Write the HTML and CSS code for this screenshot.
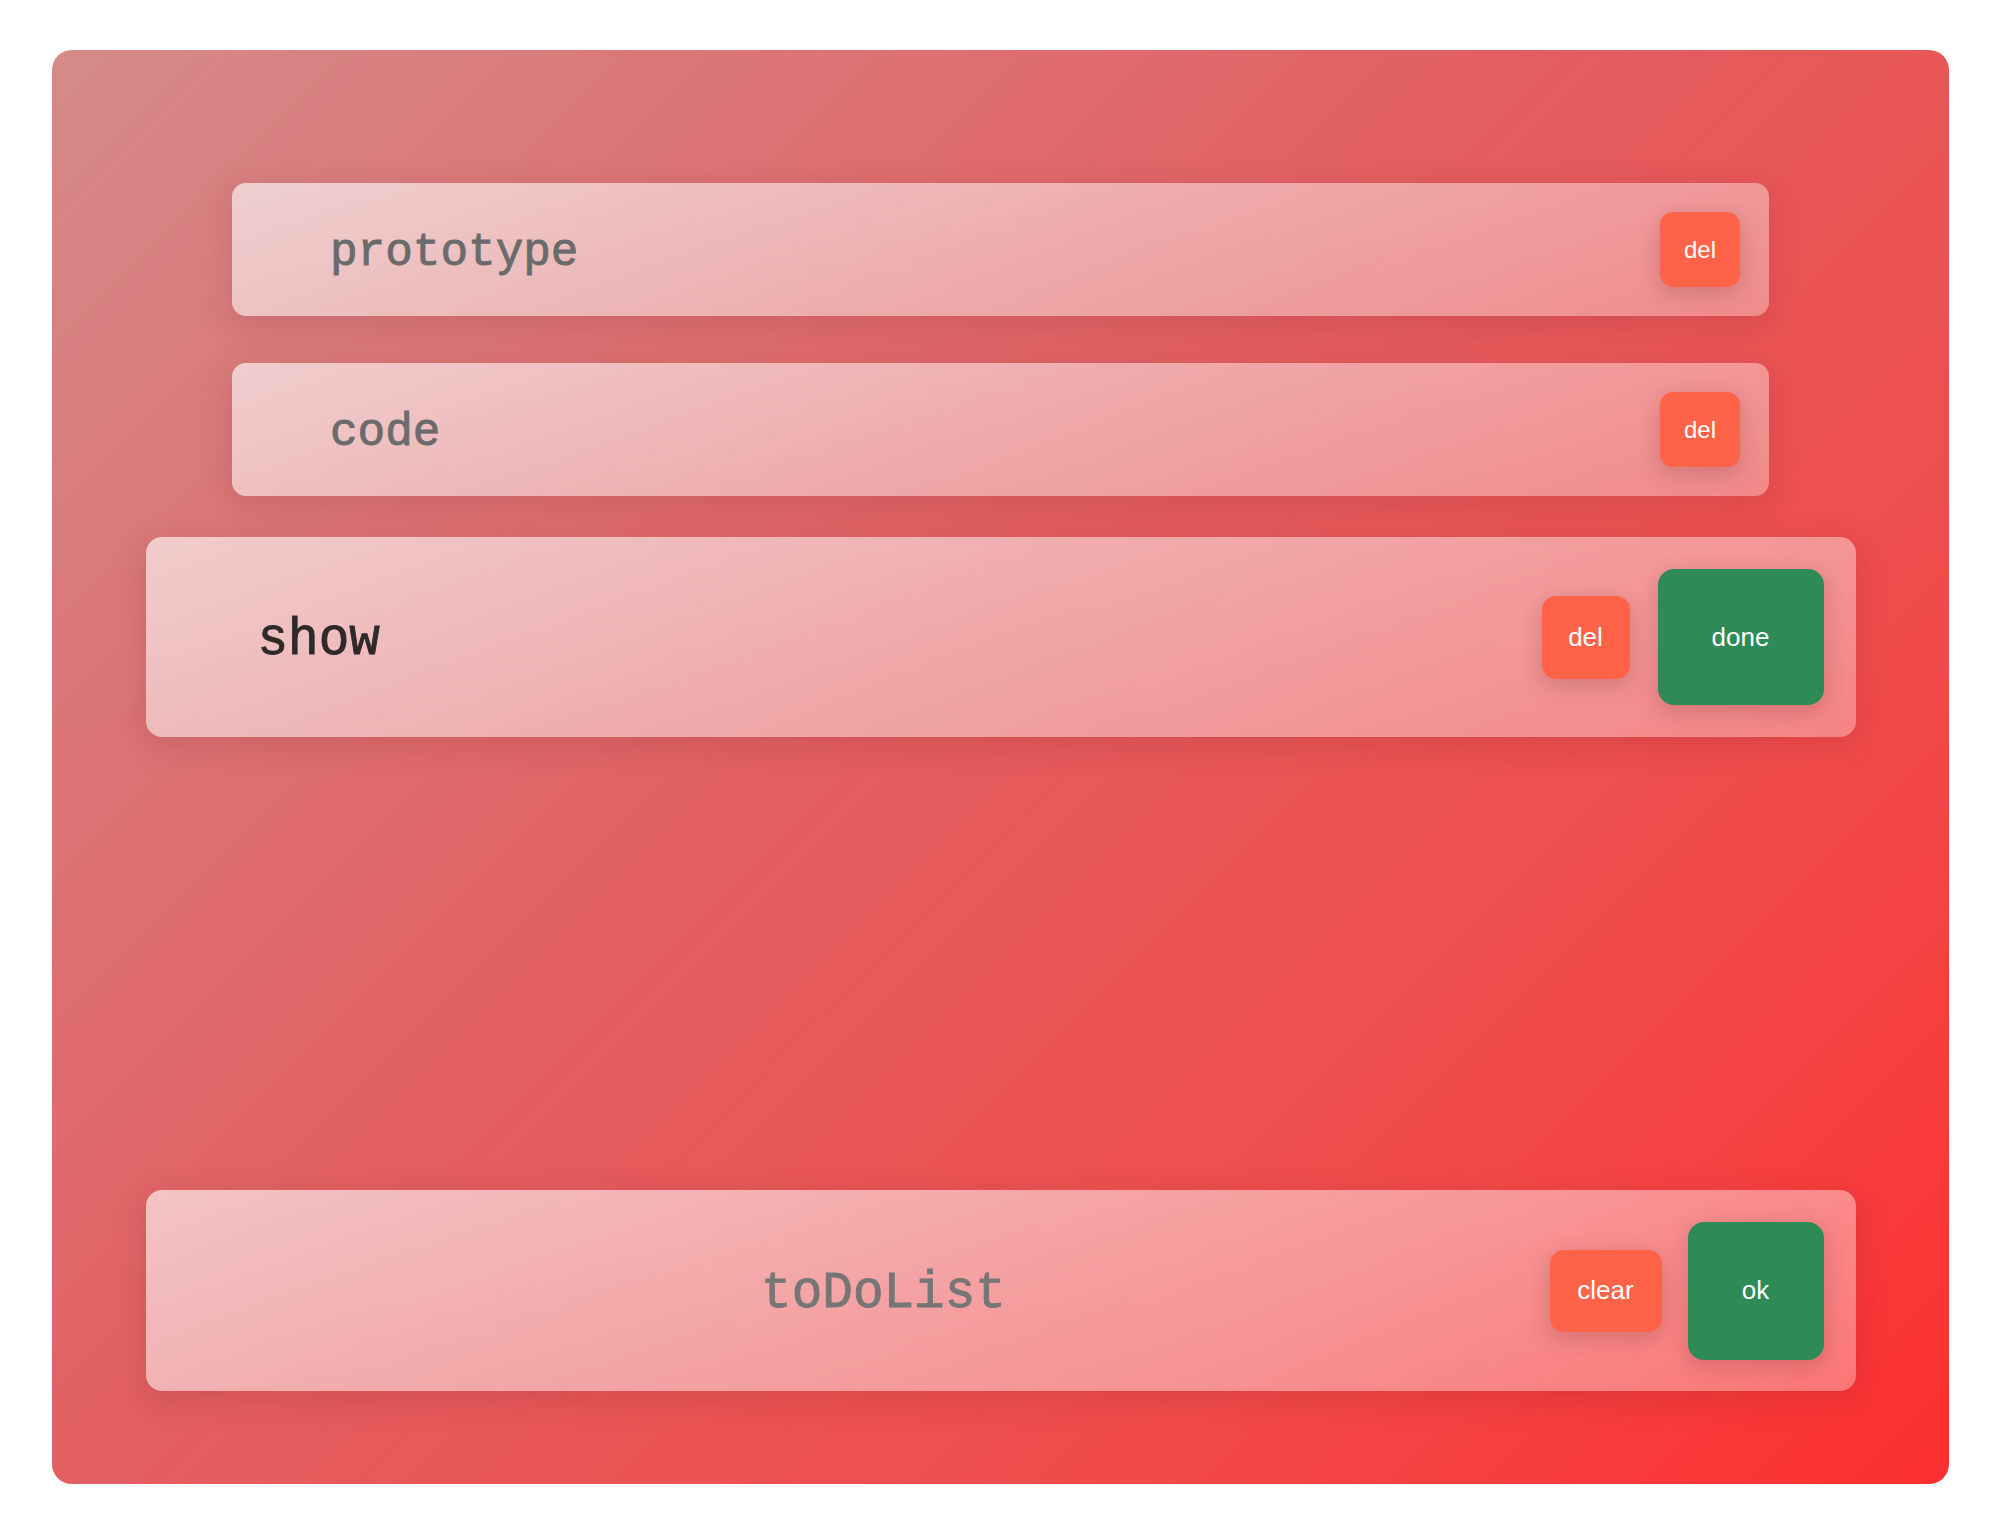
FILE: index.html
```html
<!DOCTYPE html>
<html lang="en">
<head>
<meta charset="utf-8">
<title>toDoList</title>
<link rel="stylesheet" href="styles.css">
</head>
<body>
<div class="board">
  <ul class="list">
    <li class="item">
      <span class="item-text">prototype</span>
      <button class="btn btn-del">del</button>
    </li>
    <li class="item">
      <span class="item-text">code</span>
      <button class="btn btn-del">del</button>
    </li>
    <li class="item item-active">
      <span class="item-text">show</span>
      <div class="actions">
        <button class="btn btn-del btn-del-lg">del</button>
        <button class="btn btn-done">done</button>
      </div>
    </li>
  </ul>
  <div class="entry">
    <input class="entry-input" type="text" value="toDoList">
    <div class="actions actions-entry">
      <button class="btn btn-clear">clear</button>
      <button class="btn btn-ok">ok</button>
    </div>
  </div>
</div>
</body>
</html>
```

FILE: styles.css
```css
html, body {
  margin: 0;
  padding: 0;
  background: #ffffff;
}

body {
  font-family: "Liberation Sans", Arial, sans-serif;
}

.board {
  box-sizing: border-box;
  margin: 50px 0 0 52px;
  width: 1897px;
  height: 1434px;
  border-radius: 20px;
  background: linear-gradient(135deg, #d58a8a 0%, #e35e60 45%, #f14a4a 75%, #fd2f2f 100%);
  display: flex;
  flex-direction: column;
  align-items: center;
  padding: 133px 0 93px;
}

.list {
  list-style: none;
  margin: 0;
  padding: 0;
  display: flex;
  flex-direction: column;
  align-items: center;
  flex: 1;
}

.item {
  box-sizing: border-box;
  width: 1537px;
  height: 133px;
  margin-bottom: 47px;
  padding: 0 29px 0 98px;
  border-radius: 14px;
  display: flex;
  align-items: center;
  justify-content: space-between;
  background: linear-gradient(165deg, rgba(255,255,255,0.62) 0%, rgba(255,255,255,0.45) 50%, rgba(255,255,255,0.32) 100%);
  box-shadow: 0 8px 30px 4px rgba(90,25,25,0.13);
}

.item:nth-child(2) {
  margin-bottom: 41px;
}

.item-text {
  font-family: "Liberation Mono", "Courier New", monospace;
  font-weight: normal;
  -webkit-text-stroke: 0.9px currentColor;
  font-size: 46px;
  color: #6b6b6b;
  position: relative;
  top: 3px;
}

.item-active {
  width: 1710px;
  height: 200px;
  padding: 0 32px 0 112px;
  border-radius: 16px;
}

.item-active .item-text {
  font-size: 51px;
  color: #2e2a2a;
}

.actions {
  display: flex;
  align-items: center;
  gap: 28px;
}

.btn {
  border: none;
  color: #ffffff;
  font-family: "Liberation Sans", Arial, sans-serif;
  font-size: 26px;
  padding: 0;
  cursor: pointer;
  box-shadow: 0 6px 20px 2px rgba(90,40,40,0.2);
}

.btn-del {
  width: 80px;
  height: 75px;
  border-radius: 13px;
  background: #ff6347;
  font-size: 24px;
}

.btn-del-lg {
  width: 88px;
  height: 83px;
  border-radius: 14px;
  font-size: 26px;
}

.btn-done {
  width: 166px;
  height: 136px;
  border-radius: 16px;
  background: #2e8b57;
}

.entry {
  box-sizing: border-box;
  width: 1710px;
  height: 201px;
  padding: 0 32px 0 100px;
  border-radius: 16px;
  display: flex;
  align-items: center;
  background: linear-gradient(165deg, rgba(255,255,255,0.62) 0%, rgba(255,255,255,0.45) 50%, rgba(255,255,255,0.32) 100%);
  box-shadow: 0 8px 30px 4px rgba(90,25,25,0.13);
}

.entry-input {
  flex: 1;
  min-width: 0;
  border: none;
  outline: none;
  background: transparent;
  text-align: center;
  font-family: "Liberation Mono", "Courier New", monospace;
  font-weight: normal;
  -webkit-text-stroke: 0.9px currentColor;
  font-size: 51px;
  color: #767676;
  margin: 6px 28px 0 0;
  padding: 0;
}

.actions-entry {
  gap: 26px;
}

.btn-clear {
  width: 112px;
  height: 82px;
  border-radius: 14px;
  background: #ff6347;
}

.btn-ok {
  width: 136px;
  height: 138px;
  border-radius: 16px;
  background: #2e8b57;
}
```
